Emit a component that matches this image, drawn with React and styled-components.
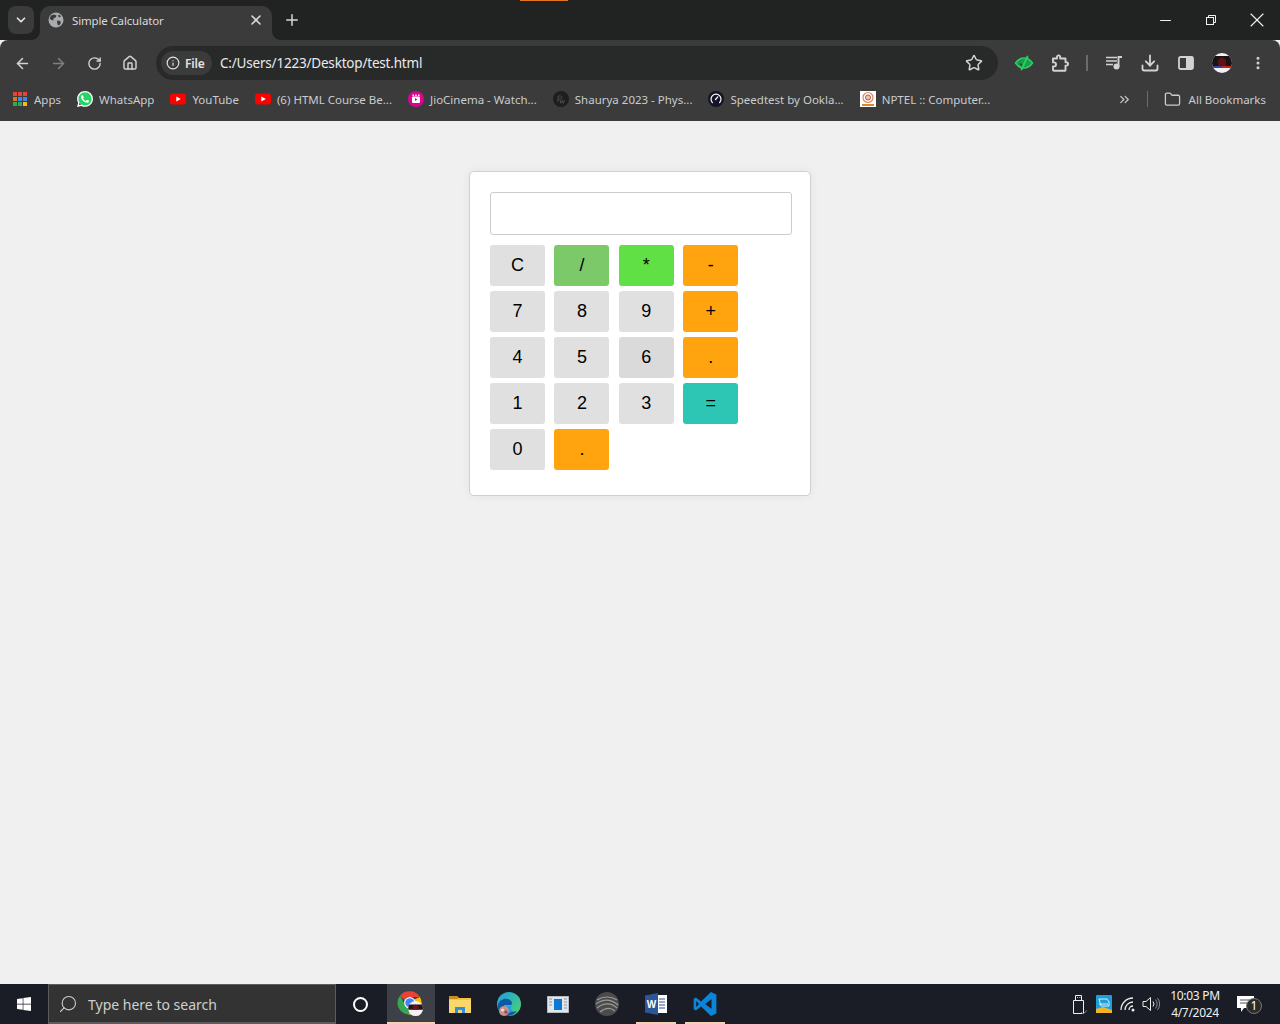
import styled, { createGlobalStyle } from 'styled-components';
import {
  ArrowLeft, ArrowRight, RotateCw, Home, Info, Star, Download, ChevronDown, X, Plus,
  Minus, EllipsisVertical, Folder, ChevronsRight, Search,
} from 'lucide-react';
import { SiWhatsapp } from 'react-icons/si';
import { FaWindows } from 'react-icons/fa';

const GlobalStyle = createGlobalStyle`
  html, body { margin: 0; padding: 0; height: 100%; }
  body { font-family: "Noto Sans", "Liberation Sans", sans-serif; background: #f0f0f0; }
`;

const Page = styled.div`
  width: 1280px;
  height: 1024px;
  display: flex;
  flex-direction: column;
  overflow: hidden;
`;

/* browser chrome */
const TabStrip = styled.div`
  position: relative;
  height: 40px;
  flex: none;
  display: flex;
  align-items: flex-end;
  padding-left: 8px;
  background: #212323;
`;

const CaptureMark = styled.div`
  position: absolute;
  top: 0;
  left: 520px;
  width: 48px;
  height: 1px;
  background: #e0741f;
`;

const TabSearch = styled.div`
  width: 26px;
  height: 28px;
  margin-bottom: 6px;
  border-radius: 8px;
  background: #3b3b3b;
  color: #e3e3e3;
  display: flex;
  align-items: center;
  justify-content: center;
`;

const Tab = styled.div`
  position: relative;
  width: 232px;
  height: 34px;
  margin-left: 6px;
  padding: 0 8px 6px 8px;
  box-sizing: border-box;
  border-radius: 10px 10px 0 0;
  background: #3b3b3b;
  display: flex;
  align-items: center;
  gap: 8px;
  color: #d9d9d9;

  &::before, &::after {
    content: '';
    position: absolute;
    bottom: 0;
    width: 8px;
    height: 8px;
  }
  &::before { left: -8px; background: radial-gradient(circle at 0 0, #212323 7.5px, #3b3b3b 8px); }
  &::after { right: -8px; background: radial-gradient(circle at 100% 0, #212323 7.5px, #3b3b3b 8px); }
`;

const TabTitle = styled.span`
  flex: 1;
  font-size: 11.5px;
  letter-spacing: -0.15px;
  white-space: nowrap;
`;

const NewTab = styled.div`
  width: 28px;
  height: 28px;
  margin: 0 0 6px 6px;
  display: flex;
  align-items: center;
  justify-content: center;
  color: #d6d6d6;
`;

const WindowControls = styled.div`
  margin-left: auto;
  align-self: stretch;
  display: flex;
`;

const WindowButton = styled.div`
  width: 46px;
  display: flex;
  align-items: center;
  justify-content: center;
  color: #f2f2f2;
`;

const Toolbar = styled.div`
  height: 40px;
  flex: none;
  box-sizing: border-box;
  padding: 6px 4px 0;
  background: #3b3b3b;
  border-radius: 8px 8px 0 0;
  display: flex;
  align-items: stretch;
`;

const ToolButton = styled.div`
  width: 36px;
  flex: none;
  display: flex;
  align-items: center;
  justify-content: center;
  color: ${({ $dim }) => ($dim ? '#7f7f7f' : '#d2d2d2')};
`;

const Omnibox = styled.div`
  flex: 1;
  margin: 0 8px;
  padding: 0 15px 0 5px;
  border-radius: 17px;
  background: #282a2a;
  display: flex;
  align-items: center;
`;

const SiteChip = styled.div`
  width: 51px;
  height: 24px;
  box-sizing: border-box;
  padding-left: 5px;
  border-radius: 12px;
  background: #3b3b3b;
  color: #e3e3e3;
  display: flex;
  align-items: center;
  gap: 5px;
  font-size: 12px;
  font-weight: 600;
  letter-spacing: -0.2px;
`;

const Url = styled.span`
  flex: 1;
  margin-left: 8px;
  font-size: 13.5px;
  letter-spacing: -0.2px;
  color: #e8eaed;
  white-space: nowrap;
`;

const ToolSeparator = styled.div`
  width: 2px;
  height: 16px;
  margin: 0 8px;
  align-self: center;
  background: #6b6b6b;
`;

const Bookmarks = styled.div`
  height: 41px;
  flex: none;
  box-sizing: border-box;
  padding: 0 6px 3px 5px;
  background: #3b3b3b;
  display: flex;
  align-items: center;
`;

const Bookmark = styled.div`
  height: 28px;
  padding: 0 8px;
  display: flex;
  align-items: center;
  gap: ${({ $gap }) => $gap || 6}px;
  font-size: 11.5px;
  color: #c9ccd0;
  white-space: nowrap;
`;

const BookmarkSpacer = styled.div`
  flex: 1;
`;

const BarSeparator = styled.div`
  width: 1px;
  height: 16px;
  margin: 0 8px 0 15px;
  background: #6b6b6b;
`;

const Overflow = styled.div`
  display: flex;
  color: #c9c9c9;
`;

/* calculator page */
const Main = styled.main`
  flex: 1;
  padding-top: 50px;
  display: flex;
  justify-content: center;
  align-items: flex-start;
  background: #f0f0f0;
`;

const Card = styled.div`
  width: 342px;
  height: 325px;
  box-sizing: border-box;
  padding: 20px;
  background: #fff;
  border: 1px solid #d0d0d0;
  border-radius: 5px;
  box-shadow: 0 0 10px rgba(0, 0, 0, 0.06);
  display: flex;
  flex-direction: column;
  gap: 10px;
`;

const Display = styled.input`
  width: 302px;
  height: 43px;
  flex: none;
  box-sizing: border-box;
  border: 1px solid #ccc;
  border-radius: 3px;
  margin: 0;
  background: #fff;
`;

const Keys = styled.div`
  display: grid;
  grid-template-columns: repeat(4, 55px);
  grid-auto-rows: 41px;
  column-gap: 9.4px;
  row-gap: 5px;
`;

const KEY_COLORS = {
  plain: '#e0e0e0',
  pressed: '#dadada',
  soft: '#7cc96a',
  bright: '#60e044',
  orange: '#ffa30e',
  teal: '#2dc5b4',
};

const Key = styled.button`
  padding: 0;
  border: none;
  border-radius: 3px;
  background: ${({ $tone }) => KEY_COLORS[$tone]};
  color: #000;
  font-family: "Liberation Sans", Arial, sans-serif;
  font-size: 18px;
`;

const KEYS = [
  ['C', 'plain'], ['/', 'soft'], ['*', 'bright'], ['-', 'orange'],
  ['7', 'plain'], ['8', 'plain'], ['9', 'plain'], ['+', 'orange'],
  ['4', 'plain'], ['5', 'plain'], ['6', 'pressed'], ['.', 'orange'],
  ['1', 'plain'], ['2', 'plain'], ['3', 'plain'], ['=', 'teal'],
  ['0', 'plain'], ['.', 'orange'],
];

/* windows taskbar */
const Taskbar = styled.div`
  height: 40px;
  flex: none;
  background: #1a1d25;
  display: flex;
  align-items: stretch;
`;

const StartButton = styled.div`
  width: 48px;
  display: flex;
  align-items: center;
  justify-content: center;
  color: #fff;
`;

const SearchBox = styled.div`
  width: 288px;
  box-sizing: border-box;
  padding-left: 9px;
  background: #333;
  border: 1px solid #5c5c5c;
  border-bottom-width: 2px;
  display: flex;
  align-items: center;
  gap: 10px;
  font-size: 14px;
  color: #cfcfcf;
`;

const SearchText = styled.span`
  padding-top: 2px;
`;

const SearchGlass = styled(Search)`
  transform: scaleX(-1);
`;

const Cortana = styled.div`
  width: 48px;
  display: flex;
  align-items: center;
  justify-content: center;
  margin-right: 3px;
`;

const CortanaRing = styled.div`
  width: 11px;
  height: 11px;
  border: 2.5px solid #fff;
  border-radius: 50%;
`;

const TaskApp = styled.div`
  flex: none;
  box-sizing: border-box;
  display: flex;
  align-items: center;
  justify-content: center;
  background: ${({ $active }) => ($active ? '#3d4047' : 'transparent')};
  box-shadow: ${({ $open }) => ($open ? 'inset 0 -2px 0 #f7cfb2' : 'none')};
  margin: ${({ $open, $active }) => ($open && !$active ? '0 4.5px' : '0')};
  width: ${({ $open, $active }) => ($active ? '48px' : $open ? '40px' : '49px')};
`;

const Tray = styled.div`
  margin-left: auto;
  display: flex;
  align-items: center;
  color: #eee;
`;

const TrayIcon = styled.div`
  width: ${({ $w }) => $w || 24}px;
  display: flex;
  align-items: center;
  justify-content: center;
`;

const Clock = styled.div`
  width: 60px;
  margin-left: 3px;
  text-align: center;
  font-size: 12px;
  line-height: 17px;
  letter-spacing: -0.3px;
  color: #f2f2f2;
`;

const Notice = styled.div`
  position: relative;
  width: 42px;
  display: flex;
  justify-content: center;
  margin-right: 13px;
`;

const NoticeBadge = styled.span`
  position: absolute;
  left: 21px;
  top: 3px;
  width: 16px;
  height: 16px;
  box-sizing: border-box;
  border: 1px solid #777;
  border-radius: 50%;
  background: #2b2b2b;
  color: #fff;
  font-size: 12px;
  line-height: 14px;
  text-align: center;
`;

const WhatsappBadge = styled.span`
  width: 16px;
  height: 16px;
  display: flex;
  border-radius: 50%;
  background: radial-gradient(circle, #25d366 60%, transparent 62%);
  color: #fff;
`;

/* drawn logos */
const GlobeIcon = () => (
  <svg width="16" height="16" viewBox="0 0 16 16">
    <circle cx="8" cy="8" r="7.5" fill="#a9abae" />
    <path d="M3 3.6 6 2.6l2.6 1-1 2-2 .6-.4 2.2L3.4 8 1.6 6.5zM9 8.4l3.4.6.4 2.2-2 2.6-1.4-1.8zM11 2.6l2 1.6-1.6 1.2-1.4-1.4z" fill="#3b3b3b" />
  </svg>
);

const AppsIcon = () => (
  <svg width="15" height="14" viewBox="0 0 15 14">
    {[
      ['#ea4335', '#ea4335', '#ea4335'],
      ['#e8710a', '#4285f4', '#4285f4'],
      ['#34a853', '#34a853', '#fbbc04'],
    ].map((row, y) =>
      row.map((c, x) => <rect key={`${x}${y}`} x={x * 5} y={y * 5} width="4" height="4" fill={c} />)
    )}
  </svg>
);

const WhatsappIcon = () => <WhatsappBadge><SiWhatsapp size={16} /></WhatsappBadge>;

const YoutubeIcon = () => (
  <svg width="16" height="16" viewBox="0 0 16 16">
    <rect y="2.5" width="16" height="11" rx="3" fill="#f00" />
    <path d="M6.3 5.4 10.8 8l-4.5 2.6z" fill="#fff" />
  </svg>
);

const JioIcon = () => (
  <svg width="16" height="16" viewBox="0 0 16 16">
    <circle cx="8" cy="8" r="8" fill="#d9068d" />
    <rect x="4" y="5.5" width="8" height="6.5" rx="1" fill="#fff" />
    <path d="M4.5 3.5h1.5v1.5H4.5zM7.2 3.5h1.5v1.5H7.2zM10 3.5h1.5v1.5H10z" fill="#fff" />
    <path d="M7 7l2.4 1.5L7 10z" fill="#d9068d" />
  </svg>
);

const PwIcon = () => (
  <svg width="16" height="16" viewBox="0 0 16 16">
    <circle cx="8" cy="8" r="8" fill="#1e1e1e" />
    <path d="M5 11V5h2.4a1.4 1.4 0 0 1 0 3H5M7 9l1 3.4 1.2-3 1.2 3 1-3.4" fill="none" stroke="#4b4b4b" strokeWidth="1" />
  </svg>
);

const SpeedIcon = () => (
  <svg width="16" height="16" viewBox="0 0 16 16">
    <circle cx="8" cy="8" r="8" fill="#141526" />
    <path d="M4.4 11.6a5 5 0 1 1 7.2 0" fill="none" stroke="#fff" strokeWidth="1.2" strokeLinecap="round" />
    <path d="m7.5 8.5 2.3-2.6" stroke="#fff" strokeWidth="1.2" strokeLinecap="round" />
  </svg>
);

const NptelIcon = () => (
  <svg width="16" height="16" viewBox="0 0 16 16">
    <rect width="16" height="16" fill="#fff" />
    <circle cx="8" cy="6.5" r="5" fill="none" stroke="#d68a5c" strokeWidth="1.2" />
    <circle cx="8" cy="6.5" r="2.6" fill="#e8c2aa" stroke="#b5342c" strokeWidth="0.8" />
    <rect x="2" y="13" width="12" height="2" fill="#d98a2b" />
  </svg>
);

const GuardIcon = () => (
  <svg width="20" height="18" viewBox="0 0 20 18">
    <path d="M1.5 9C4 5.5 7 4 10 4s6 1.5 8.5 5c-2.5 3.5-5.500 5-8.500 5s-6-1.500-8.500-5z" fill="#1f9a49" stroke="#27d065" strokeWidth="1.6" strokeLinejoin="round" />
    <path d="M6 9.500 8.500 12" stroke="#3b3b3b" strokeWidth="1.5" />
    <path d="M7.500 15.500 13.500 2.500" stroke="#27d065" strokeWidth="1.8" strokeLinecap="round" />
  </svg>
);

const ExtensionIcon = () => (
  <svg width="18" height="18" viewBox="0 0 18 18" fill="none" stroke="currentColor" strokeWidth="1.9" strokeLinejoin="round">
    <path d="M2 4.500h4V3a1.600 1.600 0 0 1 3.200 0v1.500h5.300v3.700h.9a1.700 1.700 0 0 1 0 3.400h-.9V16a.8.8 0 0 1-.8.8H3a1 1 0 0 1-1-1v-3.400h1a2 2 0 0 0 0-4H2z" />
  </svg>
);

const QueueIcon = () => (
  <svg width="18" height="16" viewBox="0 0 18 16">
    <path d="M1 2.500h11M1 6h11M1 9.500h7" stroke="currentColor" strokeWidth="1.7" />
    <circle cx="11.500" cy="11.500" r="3" fill="currentColor" />
    <path d="M13.500 11.500V2h3.500" fill="none" stroke="currentColor" strokeWidth="1.9" />
  </svg>
);

const SidePanelIcon = () => (
  <svg width="16" height="14" viewBox="0 0 16 14">
    <rect x="1" y="1" width="14" height="12" rx="1.5" fill="none" stroke="currentColor" strokeWidth="1.8" />
    <rect x="8" y="1" width="7" height="12" fill="currentColor" />
  </svg>
);

const AvatarIcon = () => (
  <svg width="20" height="20" viewBox="0 0 20 20">
    <clipPath id="avatar-clip"><circle cx="10" cy="10" r="10" /></clipPath>
    <g clipPath="url(#avatar-clip)">
      <rect width="20" height="20" fill="#f2f2f2" />
      <rect y="3" width="20" height="11" fill="#1a1214" />
      <path d="M6 13V7l4-3 4 3v6z" fill="#5e1216" />
      <rect y="13" width="10" height="2" fill="#2746a8" />
      <rect x="10" y="13" width="10" height="2" fill="#c81e1e" />
    </g>
  </svg>
);

const RestoreIcon = () => (
  <svg width="10" height="10" viewBox="0 0 10 10" fill="none" stroke="currentColor">
    <rect x="0.5" y="2.5" width="7" height="7" />
    <path d="M2.500 2.500v-2h7v7h-2" />
  </svg>
);

const ChromeIcon = () => (
  <svg width="30" height="30" viewBox="0 0 26 26">
    <path d="M12 2a10 10 0 0 1 8.700 5H12a5 5 0 0 0-4.600 3L3.600 5.700A10 10 0 0 1 12 2z" fill="#ea4335" />
    <path d="M3.600 5.700 7.900 14a5 5 0 0 0 5.700 2.800L10.600 22A10 10 0 0 1 3.600 5.700z" fill="#34a853" />
    <path d="M20.700 7a10 10 0 0 1-10.100 15l3-5.200A5 5 0 0 0 15.800 9z" fill="#fbbc04" />
    <circle cx="12" cy="12" r="5" fill="#fff" />
    <circle cx="12" cy="12" r="4" fill="#4285f4" />
    <circle cx="17" cy="17" r="6.5" fill="#f2f2f2" />
    <path d="M10.700 15.500a6.500 6.500 0 0 1 .9-2h10.800a6.500 6.500 0 0 1 .9 2v2.500H10.700z" fill="#2a1216" />
    <path d="M14.500 18v-3l2.500-1.500 2.500 1.500v3z" fill="#6e1418" />
  </svg>
);

const ExplorerIcon = () => (
  <svg width="24" height="22" viewBox="0 0 24 22">
    <path d="M1 3h8l2 2h12v15H1z" fill="#f5c242" />
    <path d="M1 3h8l1.500 3H1z" fill="#c98f1e" />
    <rect x="1" y="7" width="22" height="13" fill="#fbd669" />
    <path d="M7 20v-6h10v6h-3v-3h-4v3z" fill="#2f8fd8" />
  </svg>
);

const EdgeIcon = () => (
  <svg width="26" height="26" viewBox="0 0 26 26">
    <defs>
      <linearGradient id="edge-top" x1="0" y1="0" x2="1" y2="1">
        <stop offset="0" stopColor="#1b9de2" />
        <stop offset="1" stopColor="#52d66a" />
      </linearGradient>
    </defs>
    <circle cx="13" cy="13" r="12" fill="url(#edge-top)" />
    <path d="M2 14c1-5 6-7 10-6 4 1 5 5 3 6H8c0 5 6 8 13 6-3 4-7 5-10 5C6 25 1 20 2 14z" fill="#0c59a4" />
    <path d="M7 15h9c-2 2-1 5 2 5l-5 2c-4-1-6-4-6-7z" fill="#17a4e0" />
    <circle cx="8" cy="20" r="5" fill="#c98f8a" />
    <circle cx="6.5" cy="19" r="1.6" fill="#f1dcd6" />
    <circle cx="10" cy="21" r="1.6" fill="#8d4b4b" />
  </svg>
);

const PanelAppIcon = () => (
  <svg width="22" height="17" viewBox="0 0 22 17">
    <rect width="22" height="17" fill="#e2e5ea" />
    <rect x="7" y="3" width="8" height="11" fill="#0a78d7" />
    <path d="M2 3h3M2 6h3M2 9h3M17 3h3M17 6h3M17 9h3M17 12h3" stroke="#8c96a3" strokeWidth="1" />
    <rect width="22" height="17" fill="none" stroke="#8c929b" strokeWidth="1" />
  </svg>
);

const SphereIcon = () => (
  <svg width="24" height="24" viewBox="0 0 24 24">
    <circle cx="12" cy="12" r="12" fill="#4b4b4b" />
    <g fill="none" stroke="#9a9a9a" strokeWidth="1.2">
      <path d="M2 8c6-4 14-4 20 0M1 12c7-5 15-5 22 1M2 16c6-5 14-6 20 0M5 20c5-4 10-5 15-1" />
    </g>
  </svg>
);

const WordIcon = () => (
  <svg width="24" height="24" viewBox="0 0 24 24">
    <rect x="8" y="3" width="15" height="18" fill="#fff" />
    <path d="M15 7h6M15 10h6M15 13h6M15 16h6" stroke="#2b579a" strokeWidth="1.2" />
    <path d="M1 3.500 14 1v22L1 20.500z" fill="#2b579a" />
    <text x="7.5" y="15.5" textAnchor="middle" fontSize="10" fontWeight="700" fontFamily="Liberation Sans, sans-serif" fill="#fff">W</text>
  </svg>
);

const CodeIcon = () => (
  <svg width="26" height="26" viewBox="0 0 24 24">
    <path d="M17.500 1 8.400 9.600 3.600 6 1.500 7.100v9.800l2.100 1.100 4.800-3.600 9.100 8.600 5-2.200V3.200zM18 7.600v8.800l-5.900-4.400zM3.900 9.300 6.500 12l-2.600 2.700z" fill="#0a85d9" />
  </svg>
);

const UsbIcon = () => (
  <svg width="16" height="21" viewBox="0 0 16 21" fill="none" stroke="currentColor">
    <path d="M3.500 1.500h6v5h-6zM1.500 6.500h10v13h-10z" />
    <path d="M5 3.500h.8M7.500 3.500h.8" />
    <path d="m9 18 2 2 4-3.500" stroke="#8c8c8c" />
  </svg>
);

const SecurityIcon = () => (
  <svg width="16" height="18" viewBox="0 0 16 18">
    <rect width="16" height="18" rx="1" fill="#1f9ed8" />
    <path d="M3 4h8l2 3v4H5zM3 9h9" fill="none" stroke="#d6f1fa" />
    <path d="M0 14 7 12l9 3v3H0z" fill="#f0b429" />
  </svg>
);

const WifiIcon = () => (
  <svg width="16" height="16" viewBox="0 0 16 16" fill="none" stroke="currentColor" strokeWidth="1.3">
    <path d="M9 14A4 4 0 0 1 13 10M5 14A8 8 0 0 1 13 6M1 14A12 12 0 0 1 13 2" />
    <circle cx="13" cy="14" r="1.5" fill="currentColor" stroke="none" />
  </svg>
);

const SpeakerIcon = () => (
  <svg width="18" height="16" viewBox="0 0 18 16" fill="none" stroke="currentColor">
    <path d="M1 5.500h3L8.500 1.500v13L4 10.500H1z" />
    <path d="M11 5.500a4 4 0 0 1 0 5" />
    <path d="M13.500 3.500a7 7 0 0 1 0 9M15.500 2a9.500 9.500 0 0 1 0 12" stroke="#8c8c8c" />
  </svg>
);

const BOOKMARKS = [
  ['Apps', <AppsIcon key="i" />],
  ['WhatsApp', <WhatsappIcon key="i" />],
  ['YouTube', <YoutubeIcon key="i" />],
  ['(6) HTML Course Be...', <YoutubeIcon key="i" />],
  ['JioCinema - Watch...', <JioIcon key="i" />],
  ['Shaurya 2023 - Phys...', <PwIcon key="i" />],
  ['Speedtest by Ookla...', <SpeedIcon key="i" />],
  ['NPTEL :: Computer...', <NptelIcon key="i" />],
];

export default function App() {
  return (
    <Page>
      <GlobalStyle />
      <TabStrip>
        <CaptureMark />
        <TabSearch><ChevronDown size={14} strokeWidth={3} /></TabSearch>
        <Tab>
          <GlobeIcon />
          <TabTitle>Simple Calculator</TabTitle>
          <X size={16} strokeWidth={2.4} />
        </Tab>
        <NewTab><Plus size={18} strokeWidth={2} /></NewTab>
        <WindowControls>
          <WindowButton><Minus size={17} strokeWidth={1.4} /></WindowButton>
          <WindowButton><RestoreIcon /></WindowButton>
          <WindowButton><X size={24} strokeWidth={1.1} /></WindowButton>
        </WindowControls>
      </TabStrip>

      <Toolbar>
        <ToolButton><ArrowLeft size={17} strokeWidth={2.2} /></ToolButton>
        <ToolButton $dim><ArrowRight size={17} strokeWidth={2.2} /></ToolButton>
        <ToolButton><RotateCw size={15} strokeWidth={2.2} /></ToolButton>
        <ToolButton><Home size={16} strokeWidth={2.2} /></ToolButton>
        <Omnibox>
          <SiteChip><Info size={14} strokeWidth={2} />File</SiteChip>
          <Url>C:/Users/1223/Desktop/test.html</Url>
          <Star size={18} color="#d2d2d2" strokeWidth={2} />
        </Omnibox>
        <ToolButton><GuardIcon /></ToolButton>
        <ToolButton><ExtensionIcon /></ToolButton>
        <ToolSeparator />
        <ToolButton><QueueIcon /></ToolButton>
        <ToolButton><Download size={20} strokeWidth={2.2} /></ToolButton>
        <ToolButton><SidePanelIcon /></ToolButton>
        <ToolButton><AvatarIcon /></ToolButton>
        <ToolButton><EllipsisVertical size={16} strokeWidth={2.6} /></ToolButton>
      </Toolbar>

      <Bookmarks>
        {BOOKMARKS.map(([label, icon]) => (
          <Bookmark key={label}>{icon}{label}</Bookmark>
        ))}
        <BookmarkSpacer />
        <Overflow><ChevronsRight size={15} strokeWidth={2} /></Overflow>
        <BarSeparator />
        <Bookmark $gap={8}><Folder size={17} strokeWidth={1.8} />All Bookmarks</Bookmark>
      </Bookmarks>

      <Main>
        <Card>
          <Display type="text" readOnly />
          <Keys>
            {KEYS.map(([label, tone], i) => (
              <Key key={i} $tone={tone}>{label}</Key>
            ))}
          </Keys>
        </Card>
      </Main>

      <Taskbar>
        <StartButton><FaWindows size={16} /></StartButton>
        <SearchBox>
          <SearchGlass size={20} strokeWidth={1.3} />
          <SearchText>Type here to search</SearchText>
        </SearchBox>
        <Cortana><CortanaRing /></Cortana>
        <TaskApp $active $open><ChromeIcon /></TaskApp>
        <TaskApp><ExplorerIcon /></TaskApp>
        <TaskApp><EdgeIcon /></TaskApp>
        <TaskApp><PanelAppIcon /></TaskApp>
        <TaskApp><SphereIcon /></TaskApp>
        <TaskApp $open><WordIcon /></TaskApp>
        <TaskApp $open><CodeIcon /></TaskApp>
        <Tray>
          <TrayIcon><UsbIcon /></TrayIcon>
          <TrayIcon><SecurityIcon /></TrayIcon>
          <TrayIcon><WifiIcon /></TrayIcon>
          <TrayIcon $w={22}><SpeakerIcon /></TrayIcon>
          <Clock>10:03 PM<br />4/7/2024</Clock>
          <Notice>
            <svg width="20" height="18" viewBox="0 0 20 18">
              <path d="M1 1h17v12H8l-3 4v-4H1z" fill="#fff" />
              <path d="M4 5h11M4 8h11" stroke="#555" />
            </svg>
            <NoticeBadge>1</NoticeBadge>
          </Notice>
        </Tray>
      </Taskbar>
    </Page>
  );
}
